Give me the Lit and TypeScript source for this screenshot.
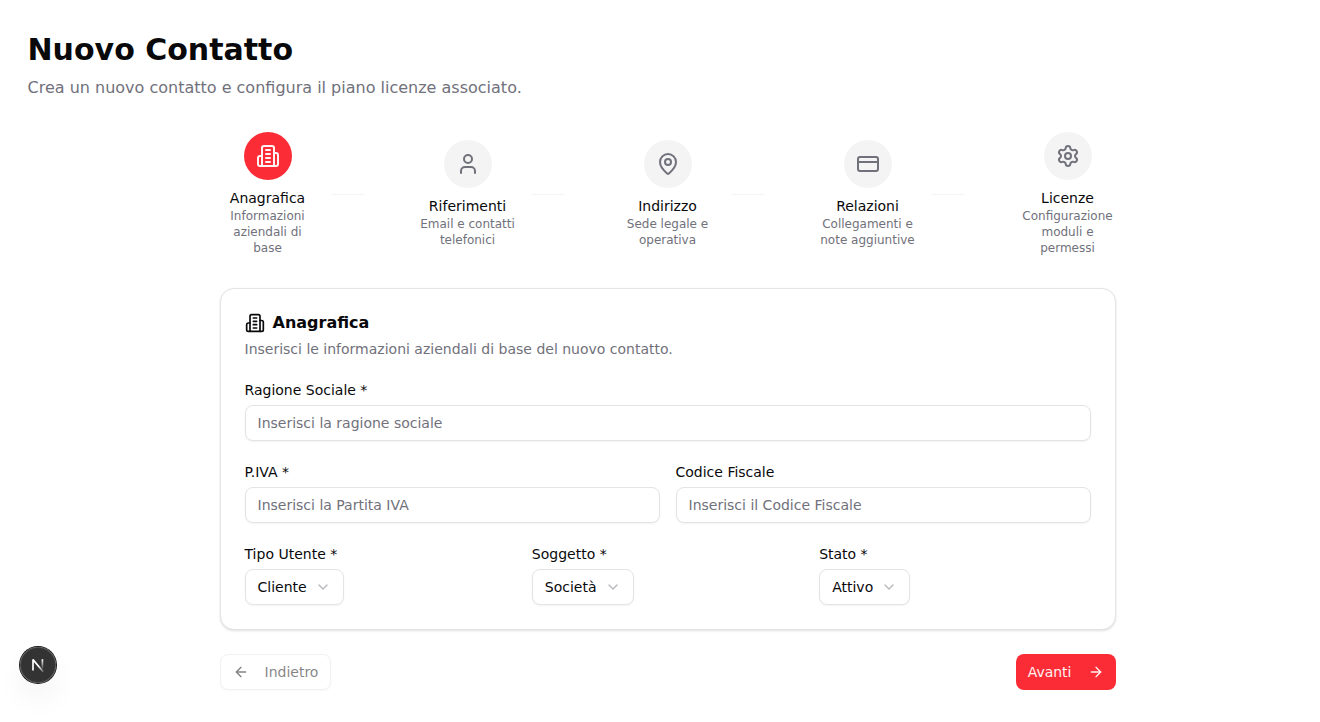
import { LitElement, html, css, svg } from "lit";
import { customElement, state } from "lit/decorators.js";

const icons: Record<string, unknown> = {
  office: svg`<path d="M6 22V4a2 2 0 0 1 2-2h8a2 2 0 0 1 2 2v18Z"/><path d="M6 12H4a2 2 0 0 0-2 2v6a2 2 0 0 0 2 2h2"/><path d="M18 9h2a2 2 0 0 1 2 2v9a2 2 0 0 1-2 2h-2"/><path d="M10 6h4"/><path d="M10 10h4"/><path d="M10 14h4"/><path d="M10 18h4"/>`,
  user: svg`<path d="M19 21v-2a4 4 0 0 0-4-4H9a4 4 0 0 0-4 4v2"/><circle cx="12" cy="7" r="4"/>`,
  pin: svg`<path d="M20 10c0 4.993-5.539 10.193-7.399 11.799a1 1 0 0 1-1.202 0C9.539 20.193 4 14.993 4 10a8 8 0 0 1 16 0"/><circle cx="12" cy="10" r="3"/>`,
  card: svg`<rect width="20" height="14" x="2" y="5" rx="2"/><line x1="2" x2="22" y1="10" y2="10"/>`,
  gear: svg`<path d="M9.671 4.136a2.34 2.34 0 0 1 4.659 0 2.34 2.34 0 0 0 3.319 1.915 2.34 2.34 0 0 1 2.33 4.033 2.34 2.34 0 0 0 0 3.831 2.34 2.34 0 0 1-2.33 4.033 2.34 2.34 0 0 0-3.319 1.915 2.34 2.34 0 0 1-4.659 0 2.34 2.34 0 0 0-3.32-1.915 2.34 2.34 0 0 1-2.33-4.033 2.34 2.34 0 0 0 0-3.831A2.34 2.34 0 0 1 6.35 6.051a2.34 2.34 0 0 0 3.319-1.915"/><circle cx="12" cy="12" r="3"/>`,
  chevron: svg`<path d="m6 9 6 6 6-6"/>`,
  left: svg`<path d="m12 19-7-7 7-7"/><path d="M19 12H5"/>`,
  right: svg`<path d="M5 12h14"/><path d="m12 5 7 7-7 7"/>`,
};

const icon = (name: string, size: number, cls = "") => html`
  <svg class="icon ${cls}" width=${size} height=${size} viewBox="0 0 24 24">${icons[name]}</svg>`;

const steps = [
  { icon: "office", title: "Anagrafica", text: "Informazioni aziendali di base" },
  { icon: "user", title: "Riferimenti", text: "Email e contatti telefonici" },
  { icon: "pin", title: "Indirizzo", text: "Sede legale e operativa" },
  { icon: "card", title: "Relazioni", text: "Collegamenti e note aggiuntive" },
  { icon: "gear", title: "Licenze", text: "Configurazione moduli e permessi" },
];

@customElement("app-root")
export class AppRoot extends LitElement {
  static styles = css`
    :host {
      display: block;
      box-sizing: border-box;
      height: 722px;
      overflow: hidden;
      position: relative;
      padding: 32px 12.5px 0 27.5px;
      background: #fff;
      color: #09090b;
      font: 14px/20px "DejaVu Sans", sans-serif;
    }
    * { box-sizing: border-box; margin: 0; }
    .icon {
      display: block;
      flex: none;
      fill: none;
      stroke: currentColor;
      stroke-width: 2;
      stroke-linecap: round;
      stroke-linejoin: round;
    }
    h1 { font-size: 30px; line-height: 36px; font-weight: 700; }
    .subtitle { margin-top: 8px; font-size: 16px; line-height: 24px; color: #71717b; }
    main { width: 896px; margin: 32px auto 0; }
    .steps { display: flex; justify-content: space-between; align-items: center; }
    .group { display: flex; align-items: center; }
    .step { width: 96px; display: flex; flex-direction: column; align-items: center; text-align: center; }
    .bubble {
      width: 48px;
      height: 48px;
      border-radius: 50%;
      display: grid;
      place-items: center;
      background: #f4f4f5;
      color: #71717b;
      margin-bottom: 8px;
    }
    .bubble.active { background: #fb2c36; color: #fef2f2; }
    .hint { font-size: 12px; line-height: 16px; color: #71717b; }
    .line { width: 32px; height: 1px; margin: 0 16px; background: #f4f4f5; }
    .card {
      margin-top: 32px;
      padding: 24px;
      border: 1px solid #e4e4e7;
      border-radius: 14px;
      background: #fff;
      box-shadow: 0 1px 3px 0 rgba(0, 0, 0, 0.1), 0 1px 2px -1px rgba(0, 0, 0, 0.1);
      display: flex;
      flex-direction: column;
      gap: 24px;
    }
    .head { display: flex; flex-direction: column; gap: 6px; }
    h2 { display: flex; align-items: center; gap: 8px; font-size: 16px; line-height: 16px; font-weight: 700; height: 20px; }
    .desc { color: #71717b; }
    .row { display: grid; gap: 16px; }
    .two { grid-template-columns: repeat(2, 1fr); }
    .three { grid-template-columns: repeat(3, 1fr); }
    .field { display: flex; flex-direction: column; align-items: flex-start; gap: 8px; min-width: 0; }
    label { line-height: 14px; display: block; }
    input, button { font: inherit; color: inherit; height: 36px; border-radius: 8px; }
    input, .select, .back {
      border: 1px solid #e4e4e7;
      background: #fff;
      box-shadow: 0 1px 2px 0 rgba(0, 0, 0, 0.05);
    }
    input { width: 100%; padding: 4px 12px; outline: none; }
    input::placeholder { color: #71717b; opacity: 1; }
    button { display: flex; align-items: center; gap: 8px; padding: 0 12px; white-space: nowrap; }
    .dim { opacity: 0.5; }
    .select .icon { color: #71717b; }
    .nav { display: flex; justify-content: space-between; margin-top: 24px; }
    .nav button { gap: 16px; }
    .back { opacity: 0.5; }
    .next { border: 0; background: #fb2c36; color: #fef2f2; }
    .badge {
      position: absolute;
      left: 20px;
      top: 647px;
      width: 36px;
      height: 36px;
      border-radius: 50%;
      background: rgba(0, 0, 0, 0.8);
      box-shadow: 0 0 0 1px #171717, inset 0 0 0 1px hsla(0, 0%, 100%, 0.14), 0 16px 32px -8px rgba(0, 0, 0, 0.16);
    }
    .badge svg { display: block; width: 36px; height: 36px; }
  `;

  @state() private current = 0;

  private field(label: string, placeholder: string) {
    return html`<div class="field"><label>${label}</label><input placeholder=${placeholder} /></div>`;
  }

  private choice(label: string, value: string) {
    return html`<div class="field">
      <label>${label}</label>
      <button class="select"><span>${value}</span>${icon("chevron", 16, "dim")}</button>
    </div>`;
  }

  render() {
    return html`
      <header>
        <h1>Nuovo Contatto</h1>
        <p class="subtitle">Crea un nuovo contatto e configura il piano licenze associato.</p>
      </header>
      <main>
        <div class="steps">
          ${steps.map((s, i) => html`<div class="group">
            <div class="step">
              <div class="bubble ${i === this.current ? "active" : ""}">${icon(s.icon, 24)}</div>
              <div>${s.title}</div>
              <div class="hint">${s.text}</div>
            </div>
            ${i < steps.length - 1 ? html`<div class="line"></div>` : ""}
          </div>`)}
        </div>
        <section class="card">
          <div class="head">
            <h2>${icon("office", 20)}<span>Anagrafica</span></h2>
            <p class="desc">Inserisci le informazioni aziendali di base del nuovo contatto.</p>
          </div>
          ${this.field("Ragione Sociale *", "Inserisci la ragione sociale")}
          <div class="row two">
            ${this.field("P.IVA *", "Inserisci la Partita IVA")}
            ${this.field("Codice Fiscale", "Inserisci il Codice Fiscale")}
          </div>
          <div class="row three">
            ${this.choice("Tipo Utente *", "Cliente")}
            ${this.choice("Soggetto *", "Società")}
            ${this.choice("Stato *", "Attivo")}
          </div>
        </section>
        <div class="nav">
          <button class="back">${icon("left", 16)}<span>Indietro</span></button>
          <button class="next"><span>Avanti</span>${icon("right", 16)}</button>
        </div>
      </main>
      <div class="badge">
        <svg viewBox="0 0 36 36" fill="none">
          <defs>
            <linearGradient id="diag" x1="19" y1="19" x2="24.5" y2="25.5" gradientUnits="userSpaceOnUse">
              <stop stop-color="#fff" /><stop offset="1" stop-color="#fff" stop-opacity="0.1" />
            </linearGradient>
            <linearGradient id="stem" x1="22.4" y1="12.4" x2="22.39" y2="22.5" gradientUnits="userSpaceOnUse">
              <stop stop-color="#fff" /><stop offset="1" stop-color="#fff" stop-opacity="0" />
            </linearGradient>
          </defs>
          <g stroke-width="1.7" stroke-linejoin="bevel">
            <path d="M23.2 24.8 13 12.6v11" stroke="url(#diag)" />
            <path d="M22.4 12.2v11.4" stroke="url(#stem)" />
          </g>
        </svg>
      </div>
    `;
  }
}
